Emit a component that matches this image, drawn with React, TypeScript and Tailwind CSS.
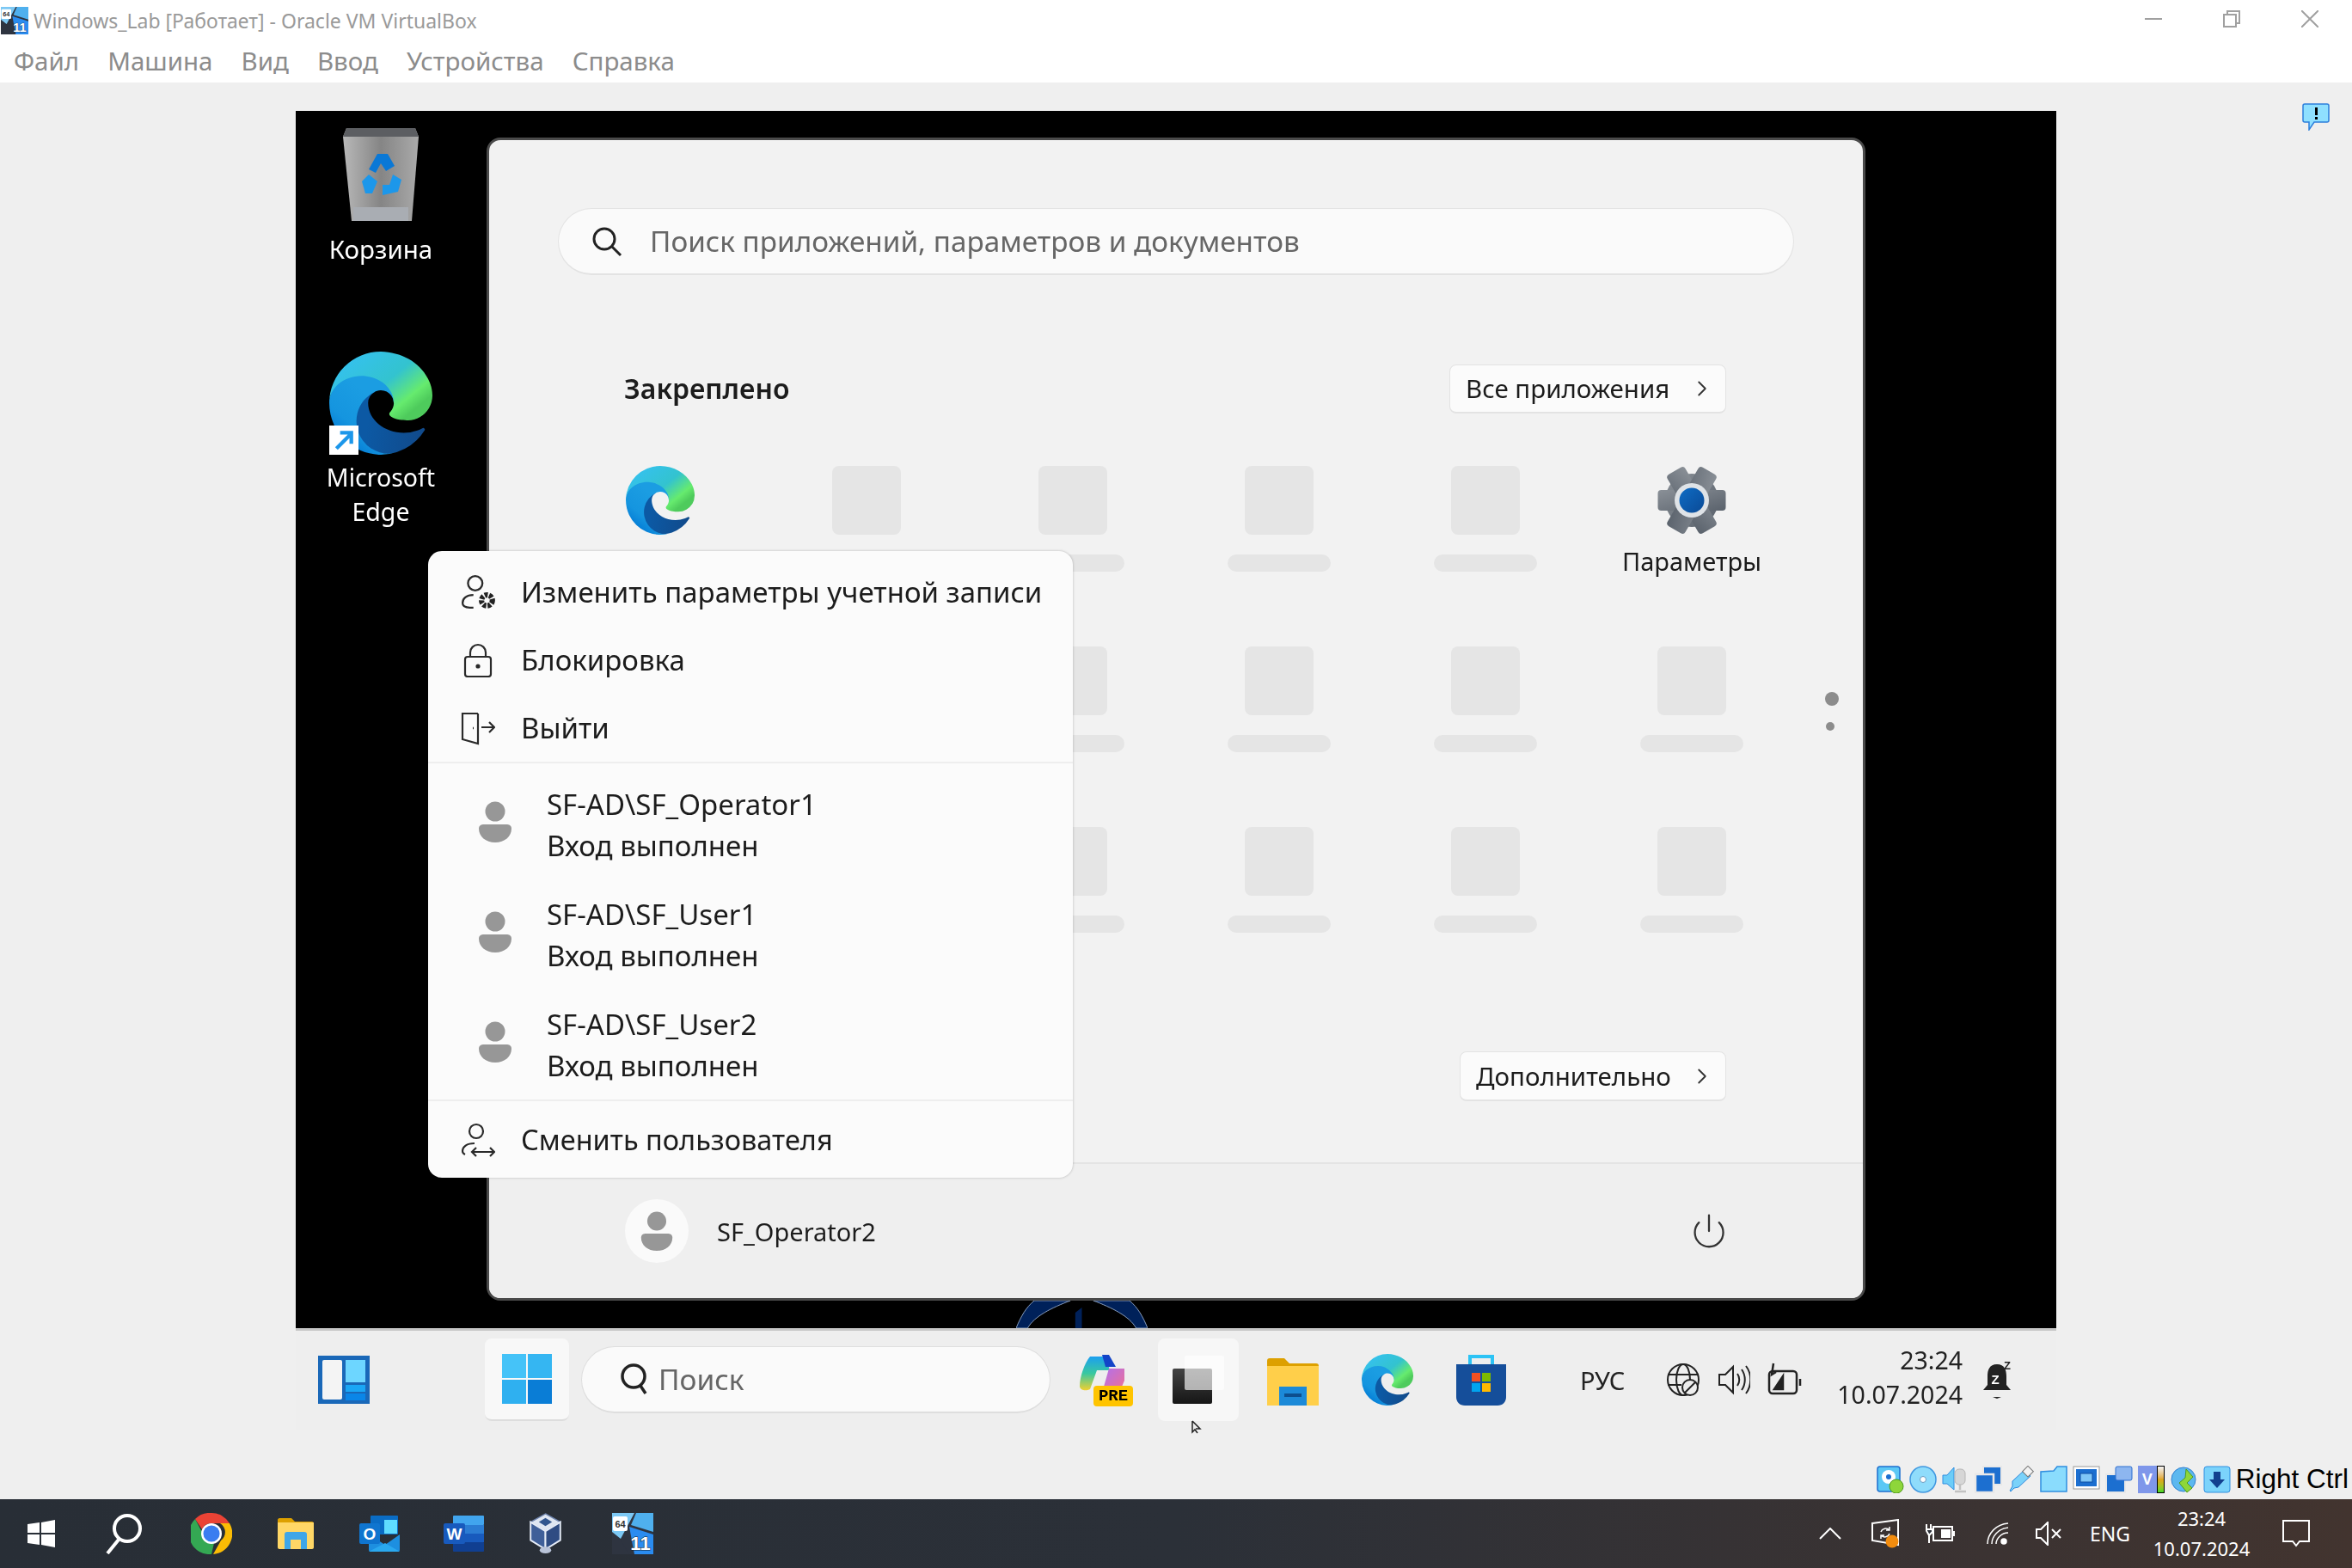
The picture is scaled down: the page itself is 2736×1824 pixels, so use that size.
import { useId } from "react";
import { ChevronRight, Power } from "lucide-react";

const pinnedRows = [0, 1, 2];
const pinnedCols = [0, 1, 2, 3, 4, 5];
const signedIn = ["SF-AD\\SF_Operator1", "SF-AD\\SF_User1", "SF-AD\\SF_User2"];

function EdgeIcon({ className }: { className: string }) {
  const id = useId();
  return (
    <svg viewBox="0 0 256 256" className={className}>
      <defs>
        <linearGradient id={id + "a"} x1="0.2" y1="0.5" x2="1" y2="0.6">
          <stop offset="0" stopColor="#0c59a4" />
          <stop offset="1" stopColor="#114a8b" />
        </linearGradient>
        <linearGradient id={id + "b"} x1="0.6" y1="0.3" x2="0.2" y2="0.9">
          <stop offset="0" stopColor="#1b9de2" />
          <stop offset="0.6" stopColor="#1595df" />
          <stop offset="1" stopColor="#0178d4" />
        </linearGradient>
        <linearGradient id={id + "c"} x1="0.1" y1="0.1" x2="0.9" y2="0.75">
          <stop offset="0" stopColor="#35c1f1" />
          <stop offset="0.55" stopColor="#33c3cf" />
          <stop offset="0.85" stopColor="#66eb6e" />
          <stop offset="1" stopColor="#4ecb5c" />
        </linearGradient>
      </defs>
      <path fill={`url(#${id}a)`} d="M231 190.5c-3.4 1.8-6.900 3.400-10.500 4.700a101.500 101.500 0 0 1-35.800 6.400c-47.200 0-88.300-32.400-88.300-74.100a31.500 31.500 0 0 1 16.400-27.300c-42.700 1.800-53.700 46.300-53.700 72.300 0 73.700 67.900 81.100 82.500 81.100 7.900 0 19.800-2.300 27-4.600l1.300-.4a128.100 128.100 0 0 0 66.500-52.700 4 4 0 0 0-5.400-5.700z" />
      <path fill={`url(#${id}b)`} d="M105.700 241.400A79.200 79.200 0 0 1 83 220a80.700 80.700 0 0 1 29.500-120c3.200-1.500 8.500-4.100 15.600-4a32.400 32.400 0 0 1 25.700 13 31.900 31.900 0 0 1 6.300 18.700c0-.2 24.500-79.600-80-79.600-43.900 0-80 41.600-80 78.200a130.200 130.200 0 0 0 12.100 56 128 128 0 0 0 156.400 67 75.500 75.500 0 0 1-62.800-8z" />
      <path fill={`url(#${id}c)`} d="M152.300 148.900c-.8 1-3.300 2.500-3.300 5.700 0 2.600 1.700 5.100 4.700 7.200 14.400 10 41.500 8.700 41.600 8.700a59.600 59.600 0 0 0 30.300-8.400A61.400 61.400 0 0 0 256 110.500c.3-22.400-8-37.300-11.300-43.900C223.500 25.100 177.700 1.200 128 0A128 128 0 0 0 0 126.200c.5-36.500 36.800-66 80-66 3.500 0 23.500.3 42 10a72.600 72.600 0 0 1 31 29.300c6.100 10.600 7.200 24.100 7.200 29.500s-2.700 13.300-7.900 20z" />
    </svg>
  );
}

function LabIcon({ className }: { className: string }) {
  return (
    <svg viewBox="0 0 48 48" className={className}>
      <rect width="48" height="48" rx="1" fill="#2e3440" />
      <path d="M0 0h26L10 30 0 22z" fill="#7cc8f4" />
      <path d="M28 0h20v22L22 14z" fill="#4fb0ee" />
      <path d="M0 24l10 8 10 16H0z" fill="#2e3440" />
      <path d="M20 16l28 9v23H26z" fill="#2a8cf0" />
      <rect x="1" y="4" width="17" height="17" rx="2" fill="#fff" />
      <text x="9.500" y="17" textAnchor="middle" fontSize="11" fontWeight="700" fill="#333" fontFamily="'Liberation Sans',sans-serif">64</text>
      <text x="33" y="43" textAnchor="middle" fontSize="22" fontWeight="700" fill="#fff" stroke="#123" strokeWidth="1" paintOrder="stroke" fontFamily="'Liberation Sans',sans-serif">11</text>
    </svg>
  );
}

function PersonGlyph({ className }: { className: string }) {
  return (
    <svg viewBox="0 0 38 48" className={className}>
      <circle cx="19" cy="12" r="11.500" fill="#979797" />
      <path d="M0 32c0-4 3-5 6-5h26c3 0 6 1 6 5 0 9-8 16-19 16S0 41 0 32z" fill="#979797" />
    </svg>
  );
}

function VBoxCube({ className }: { className: string }) {
  return (
    <svg viewBox="0 0 40 50" className={className}>
      <path d="M20 1l18 10-18 11L2 11z" fill="#dfe6f2" stroke="#6d83ad" strokeWidth="1.500" />
      <path d="M2 11l18 11v22L2 33z" fill="#3f5f99" stroke="#e6ecf7" strokeWidth="2" />
      <path d="M38 11L20 22v22l18-11z" fill="#2f4c83" stroke="#e6ecf7" strokeWidth="2" />
      <ellipse cx="20" cy="45" rx="7" ry="4" fill="#b9c3d8" />
      <path d="M20 6l8 5-8 5-8-5z" fill="#31558e" />
    </svg>
  );
}

function StatusIcons() {
  return (
    <div className="flex items-center gap-[6px]">
      <svg viewBox="0 0 32 32" className="h-[32px] w-[32px]">
        <rect x="1" y="1" width="26" height="29" rx="3" fill="#5cc8f5" stroke="#1c6fd0" strokeWidth="1.500" />
        <circle cx="14" cy="13" r="8" fill="#fff" />
        <circle cx="14" cy="13" r="3" fill="#1c6fd0" />
        <circle cx="23" cy="24" r="8" fill="#8ed63a" stroke="#4e9a1e" />
      </svg>
      <svg viewBox="0 0 32 32" className="h-[32px] w-[32px]">
        <circle cx="16" cy="16" r="15" fill="#8fdcfb" stroke="#3f97e0" strokeWidth="1.500" />
        <circle cx="16" cy="16" r="3.500" fill="#fff" stroke="#6a9cc0" />
      </svg>
      <svg viewBox="0 0 32 32" className="h-[32px] w-[32px]">
        <path d="M1 11h5l8-9v26l-8-7H1z" fill="#6ccdf8" stroke="#2f8ee0" />
        <rect x="15" y="4" width="12" height="18" rx="5" fill="#d6d6d6" stroke="#b5b5b5" />
        <path d="M21 22v6M15 30h13" stroke="#c2c2c2" strokeWidth="2.500" />
      </svg>
      <svg viewBox="0 0 32 32" className="h-[32px] w-[32px]">
        <rect x="10" y="1" width="21" height="21" fill="#1c6fd0" stroke="#e8e8e8" strokeWidth="2" />
        <rect x="1" y="10" width="21" height="21" fill="#1c6fd0" stroke="#e8e8e8" strokeWidth="2.500" />
      </svg>
      <svg viewBox="0 0 32 32" className="h-[32px] w-[32px]">
        <path d="M6 18L20 5l7 7-14 13-5 1-4 4-1-1 3-5z" fill="#7ad2fa" stroke="#2d88dc" />
        <rect x="20" y="2" width="9" height="9" transform="rotate(45 24 6)" fill="#f2f2f2" stroke="#777" />
      </svg>
      <svg viewBox="0 0 32 32" className="h-[32px] w-[32px]">
        <path d="M1 30V7l15-1 4-5h11v29z" fill="#8adcfd" stroke="#2f8ee0" strokeWidth="1.500" />
      </svg>
      <svg viewBox="0 0 32 32" className="h-[32px] w-[32px]">
        <rect x="1" y="1" width="30" height="26" fill="#fff" stroke="#9a9a9a" />
        <rect x="4" y="4" width="24" height="20" fill="#1c6fd0" />
        <rect x="9" y="9" width="14" height="10" fill="#7fc6f7" stroke="#0e4fa3" />
      </svg>
      <svg viewBox="0 0 32 32" className="h-[32px] w-[32px]">
        <rect x="1" y="10" width="22" height="21" fill="#1c6fd0" stroke="#e8e8e8" strokeWidth="2" />
        <rect x="12" y="1" width="19" height="16" rx="2" fill="#8db6f0" stroke="#2d6fd0" />
      </svg>
      <div className="flex h-[32px] w-[32px]">
        <div className="flex h-[32px] w-[22px] items-center justify-center bg-[#7f97ea] font-['Liberation_Sans',sans-serif] text-[18px] font-bold leading-none text-white">V</div>
        <div className="h-[32px] w-[9px] border border-black bg-gradient-to-b from-[#f4f4f4] via-[#e0a51a] to-[#38d92c]" />
      </div>
      <svg viewBox="0 0 32 32" className="h-[32px] w-[32px]">
        <circle cx="15" cy="16" r="14" fill="#5cb8ef" stroke="#2f7fd0" />
        <path d="M18 4l8 9-7 7 6 6-6 5-9-11 7-6z" fill="#8ed63a" stroke="#4e9a1e" />
      </svg>
      <svg viewBox="0 0 32 32" className="h-[32px] w-[32px]">
        <rect x="1" y="1" width="30" height="30" rx="3" fill="#7bd3fb" stroke="#2f8ee0" />
        <path d="M12 7h8v9h5L16 26 7 16h5z" fill="#123f8f" />
      </svg>
    </div>
  );
}

function DesktopTaskbar() {
  return (
    <div className="flex h-[119px] shrink-0 items-center border-t-[3px] border-[#c6c6c6] bg-[#eeeeee] pb-[2px]">
      <svg viewBox="0 0 60 56" className="ml-[26px] h-[56px] w-[60px]">
        <rect width="60" height="56" fill="#1a68b8" />
        <rect x="5" y="5" width="23" height="46" rx="2" fill="#f4f4f4" />
        <rect x="32" y="5" width="23" height="26" fill="#6dd6ff" />
        <rect x="32" y="34" width="23" height="8" fill="#1aa6f5" />
        <rect x="32" y="44" width="23" height="8" fill="#0a86e8" />
      </svg>
      <div className="ml-[134px] flex h-[96px] w-[98px] items-center justify-center rounded-lg border-b-2 border-[#dddddd] bg-[#f8f8f8]">
        <svg viewBox="0 0 58 58" className="h-[58px] w-[58px]">
          <rect width="28" height="28" fill="#45c3f8" />
          <rect x="30" width="28" height="28" fill="#35b6f2" />
          <rect y="30" width="28" height="28" fill="#2fb0f0" />
          <rect x="30" y="30" width="28" height="28" fill="#0a7dd6" />
        </svg>
      </div>
      <div className="ml-[14px] flex h-[78px] w-[546px] items-center rounded-full border border-b-2 border-[#dedede] bg-[#fafafa] pl-[44px]">
        <svg viewBox="0 0 34 38" fill="none" stroke="#222" strokeWidth="3.500" className="h-[38px] w-[34px]">
          <circle cx="16" cy="15" r="13" />
          <path d="M24 26l6 9" />
        </svg>
        <span className="ml-[11px] text-[33.500px] leading-none text-[#666666]">Поиск</span>
      </div>
      <div className="relative ml-[34px] h-[58px] w-[56px]">
        <svg viewBox="0 0 56 58" className="h-[58px] w-[56px]">
          <defs>
            <linearGradient id="copilotA" x1="0" y1="0" x2="0" y2="1">
              <stop offset="0" stopColor="#1c9ff0" />
              <stop offset="0.5" stopColor="#38c8a0" />
              <stop offset="1" stopColor="#f0d030" />
            </linearGradient>
            <linearGradient id="copilotB" x1="0" y1="0" x2="1" y2="1">
              <stop offset="0" stopColor="#b070f0" />
              <stop offset="1" stopColor="#f07090" />
            </linearGradient>
          </defs>
          <path d="M12 2h18l5 16H20L12 40c-4 2-11 2-12-3 0-12 6-28 12-35z" fill="url(#copilotA)" />
          <path d="M26 0h8l8 14H30z" fill="#1244c8" />
          <path d="M34 16h18v14l-6 14H26z" fill="url(#copilotB)" />
        </svg>
        <span className="absolute bottom-[-2px] right-[-6px] flex h-[24px] w-[46px] items-center justify-center rounded-sm bg-[#ffc400] font-['Liberation_Mono',monospace] text-[19px] font-bold leading-none text-black">PRE</span>
      </div>
      <div className="relative ml-[35px] flex h-[96px] w-[94px] items-center justify-center rounded-lg bg-[#f7f7f7]">
        <div className="relative h-[56px] w-[60px]">
          <div className="absolute bottom-0 left-0 h-[41px] w-[46px] rounded-[2px] bg-gradient-to-b from-[#444444] to-[#161616]" />
          <div className="absolute right-0 top-0 h-[40px] w-[46px] rounded-[2px] bg-white/65" />
        </div>
      </div>
      <svg viewBox="0 0 60 60" className="ml-[33px] h-[60px] w-[60px]">
        <path d="M0 8c0-2 1-3 3-3h17l6 6h31c2 0 3 1 3 3v12H0z" fill="#dda000" />
        <path d="M0 14h60v46H0z" fill="#ffcf4a" />
        <path d="M14 38h32v22H14z" fill="#1c8ad8" />
        <rect x="20" y="46" width="20" height="4" fill="#0d4f8e" />
      </svg>
      <EdgeIcon className="ml-[50px] h-[60px] w-[60px]" />
      <svg viewBox="0 0 58 60" className="ml-[50px] h-[60px] w-[58px]">
        <path d="M16 14V3h26v11" fill="none" stroke="#2cc3f5" strokeWidth="4" />
        <path d="M0 12h58v38c0 6-4 10-10 10H10C4 60 0 56 0 50z" fill="#154e9a" />
        <rect x="18" y="22" width="10" height="10" fill="#f25022" />
        <rect x="30" y="22" width="10" height="10" fill="#7fba00" />
        <rect x="18" y="34" width="10" height="10" fill="#00a4ef" />
        <rect x="30" y="34" width="10" height="10" fill="#ffb900" />
      </svg>
      <span className="ml-[86px] text-[29px] leading-none text-[#222222]">РУС</span>
      <svg viewBox="0 0 40 40" fill="none" stroke="#222" strokeWidth="2" className="ml-[48px] h-[40px] w-[40px]">
        <circle cx="20" cy="20" r="18" />
        <ellipse cx="20" cy="20" rx="8" ry="18" />
        <path d="M2 14h36M2 26h16" />
        <circle cx="28" cy="29" r="9" fill="#eeeeee" />
        <path d="M22 35l12-12" />
      </svg>
      <svg viewBox="0 0 38 40" fill="none" stroke="#222" strokeWidth="2" className="ml-[20px] h-[40px] w-[38px]">
        <path d="M2 14h7l9-9v30l-9-9H2z" />
        <path d="M23 13c3 4 3 10 0 14M28 8c5 7 5 17 0 24M33 4c7 9 7 23 0 32" />
      </svg>
      <svg viewBox="0 0 40 40" fill="none" stroke="#222" strokeWidth="2.500" className="ml-[20px] h-[40px] w-[40px]">
        <rect x="2" y="10" width="32" height="26" rx="4" />
        <path d="M38 19v8" />
        <path d="M8 31l10-15v15z" fill="#222" />
        <path d="M7 1L5 14l5-3" />
      </svg>
      <div className="ml-auto mb-[6px] flex w-[180px] flex-col items-end gap-[3px] text-[28.500px] leading-[37px] text-[#222222]">
        <span>23:24</span>
        <span>10.07.2024</span>
      </div>
      <svg viewBox="0 0 34 44" className="ml-[23px] mr-[52px] h-[44px] w-[34px]">
        <path d="M17 4C8 4 6 11 6 18v10l-5 6h32l-5-6V18c0-7-2-14-11-14z" fill="#222" />
        <path d="M12 42h10l-5 2z" fill="#222" />
        <text x="15" y="27" textAnchor="middle" fontSize="15" fontWeight="700" fill="#fff" fontFamily="'Liberation Sans',sans-serif">Z</text>
        <text x="29" y="10" textAnchor="middle" fontSize="13" fontWeight="700" fill="#222" fontFamily="'Liberation Sans',sans-serif">Z</text>
      </svg>
    </div>
  );
}

function AccountMenu() {
  return (
    <div className="absolute left-[154px] top-[512px] w-[750px] overflow-hidden rounded-[16px] bg-[#fbfbfb] text-[33px] text-[#1c1c1c] shadow-[0_0_3px_rgba(0,0,0,0.25)]">
      <div className="flex h-[247px] flex-col border-b-2 border-[#eeeeee] pt-[8px]">
        <div className="flex h-[80px] items-center pl-[38px]">
          <svg viewBox="0 0 40 40" fill="none" stroke="#2a2a2a" strokeWidth="2.200" className="h-[42px] w-[42px]">
            <circle cx="16" cy="10" r="8" />
            <path d="M14 23C6 23 2 27 2 32c0 3 3 5 8 5h4" />
            <circle cx="29" cy="29" r="6" stroke="#222" strokeWidth="6" strokeDasharray="3.500 1.500" />
          </svg>
          <span className="ml-[28px] whitespace-nowrap leading-none">Изменить параметры учетной записи</span>
        </div>
        <div className="flex h-[80px] items-center pl-[38px]">
          <svg viewBox="0 0 40 40" fill="none" stroke="#2a2a2a" strokeWidth="2.200" className="h-[40px] w-[40px]">
            <rect x="5" y="16" width="30" height="23" rx="3" />
            <path d="M11 16V11a9 9 0 0 1 18 0v5" />
            <circle cx="20" cy="27" r="1.500" fill="#2a2a2a" />
          </svg>
          <span className="ml-[30px] leading-none">Блокировка</span>
        </div>
        <div className="flex h-[80px] items-center pl-[38px]">
          <svg viewBox="0 0 40 40" fill="none" stroke="#2a2a2a" strokeWidth="2.200" className="h-[40px] w-[40px]">
            <path d="M20 3H2v30l18 5V3" />
            <path d="M14 20h1" strokeWidth="2.500" />
            <path d="M24 19h15M33 13l6 6-6 6" />
          </svg>
          <span className="ml-[30px] leading-none">Выйти</span>
        </div>
      </div>
      <div className="flex h-[393px] flex-col border-b-2 border-[#eeeeee] pt-[8px]">
        {signedIn.map((name) => (
          <div key={name} className="flex h-[128px] shrink-0 items-center pl-[59px]">
            <PersonGlyph className="mb-[9px] h-[48px] w-[38px]" />
            <div className="ml-[41px] flex flex-col">
              <span className="leading-[44px]">{name}</span>
              <span className="mt-[4px] leading-[44px]">Вход выполнен</span>
            </div>
          </div>
        ))}
      </div>
      <div className="flex h-[89px] items-center pl-[38px] pt-[2px]">
        <svg viewBox="0 0 40 40" fill="none" stroke="#2a2a2a" strokeWidth="2.200" className="mb-[2px] h-[40px] w-[40px]">
          <circle cx="18" cy="10" r="8" />
          <path d="M16 24C7 24 2 28 2 33c0 2 1 3 3 4" />
          <path d="M13 34h26M18 29l-5 5 5 5M34 29l5 5-5 5" />
        </svg>
        <span className="ml-[30px] text-[32.500px] leading-none">Сменить пользователя</span>
      </div>
    </div>
  );
}

function StartMenu() {
  return (
    <div className="absolute left-[222px] top-[31px] flex h-[1353px] w-[1604px] flex-col overflow-hidden rounded-[16px] border-[3px] border-[#4a4a4a] bg-[#f2f2f2] text-[#1c1c1c]">
      <div className="mx-[80px] mt-[79px] flex h-[78px] shrink-0 items-center rounded-full border border-b-2 border-[#e3e3e3] bg-[#fafafa] pl-[38px]">
        <svg viewBox="0 0 36 36" fill="none" stroke="#222" strokeWidth="3" className="h-[36px] w-[36px]">
          <circle cx="15" cy="15" r="12" />
          <path d="M24 24l10 10" />
        </svg>
        <span className="ml-[32px] text-[33.300px] leading-none text-[#666666]">Поиск приложений, параметров и документов</span>
      </div>
      <div className="mt-[103px] flex h-[58px] shrink-0 items-center justify-between pl-[157px] pr-[159px]">
        <span className="text-[32px] font-semibold leading-none">Закреплено</span>
        <div className="flex h-[57px] w-[322px] items-center justify-between rounded-lg border border-b-2 border-[#e3e3e3] bg-[#fbfbfb] pl-[18px] pr-[12px]">
          <span className="text-[29.500px] leading-none">Все приложения</span>
          <ChevronRight className="h-[30px] w-[30px] text-[#333333]" strokeWidth={1.500} />
        </div>
      </div>
      <div className="relative mt-[61px] grid grid-cols-[repeat(6,240px)] grid-rows-[repeat(3,210px)] pl-[79px]">
        {pinnedRows.map((row) =>
          pinnedCols.map((col) => {
            if (row === 0 && col === 0) {
              return (
                <div key="edge" className="flex justify-center">
                  <EdgeIcon className="h-[80px] w-[80px]" />
                </div>
              );
            }
            if (row === 0 && col === 5) {
              return (
                <div key="settings" className="flex flex-col items-center">
                  <svg viewBox="0 0 80 80" className="h-[80px] w-[80px]">
                    <defs>
                      <linearGradient id="gearFill" x1="0" y1="0" x2="1" y2="1">
                        <stop offset="0" stopColor="#8a9097" />
                        <stop offset="1" stopColor="#5a626c" />
                      </linearGradient>
                      <linearGradient id="gearCore" x1="0" y1="0" x2="1" y2="1">
                        <stop offset="0" stopColor="#0f6cc4" />
                        <stop offset="1" stopColor="#0a4a96" />
                      </linearGradient>
                    </defs>
                    <circle cx="40" cy="40" r="31" fill="url(#gearFill)" />
                    {[0, 60, 120].map((a) => (
                      <rect key={a} x="0.500" y="28" width="79" height="24" rx="4" fill="url(#gearFill)" transform={`rotate(${a} 40 40)`} />
                    ))}
                    <circle cx="40" cy="40" r="20" fill="#dfe3e7" />
                    <circle cx="40" cy="40" r="14.500" fill="url(#gearCore)" />
                  </svg>
                  <span className="mt-[11px] text-[29px] leading-[40px]">Параметры</span>
                </div>
              );
            }
            return (
              <div key={`${row}-${col}`} className="flex flex-col items-center">
                <div className="h-[80px] w-[80px] rounded-lg bg-[#e5e5e5]" />
                <div className="mt-[23px] h-[20px] w-[120px] rounded-full bg-[#e5e5e5]" />
              </div>
            );
          }),
        )}
        <div className="absolute left-[1554px] top-[263px] h-[16px] w-[16px] rounded-full bg-[#8c8c8c]" />
        <div className="absolute left-[1555px] top-[298px] h-[10px] w-[10px] rounded-full bg-[#8c8c8c]" />
      </div>
      <div className="mt-[51px] flex h-[58px] shrink-0 justify-end pr-[159px]">
        <div className="flex w-[310px] items-center justify-between rounded-lg border border-b-2 border-[#e3e3e3] bg-[#fbfbfb] pl-[18px] pr-[12px]">
          <span className="text-[29.500px] leading-none">Дополнительно</span>
          <ChevronRight className="h-[30px] w-[30px] text-[#333333]" strokeWidth={1.500} />
        </div>
      </div>
      <div className="mt-auto flex h-[158px] shrink-0 items-center border-t-2 border-[#e4e4e4] bg-[#efefef] pl-[158px] pr-[157px]">
        <div className="flex h-[74px] w-[74px] items-center justify-center rounded-full bg-[#fafafa]">
          <PersonGlyph className="h-[46px] w-[38px]" />
        </div>
        <span className="ml-[33px] text-[29px] leading-none">SF_Operator2</span>
        <Power className="ml-auto h-[44px] w-[44px] text-[#333333]" strokeWidth={1.250} />
      </div>
    </div>
  );
}

export default function App() {
  return (
    <div className="flex h-[1824px] w-[2736px] flex-col overflow-hidden bg-[#efefef] font-['Noto_Sans',sans-serif]">
      <div className="flex h-[96px] shrink-0 flex-col bg-white">
        <div className="flex h-[48px] items-center pl-[1px] pr-[39px]">
          <LabIcon className="h-[32px] w-[32px]" />
          <span className="ml-[6px] text-[23px] leading-none text-[#9a9a9a]">Windows_Lab [Работает] - Oracle VM VirtualBox</span>
          <div className="ml-auto flex gap-[71px] pb-[4px]">
            <svg viewBox="0 0 20 20" stroke="#a0a0a0" strokeWidth="2" fill="none" className="h-[20px] w-[20px]">
              <path d="M0 10h20" />
            </svg>
            <svg viewBox="0 0 20 20" stroke="#a0a0a0" strokeWidth="2" fill="none" className="h-[20px] w-[20px]">
              <rect x="1" y="5" width="14" height="14" />
              <path d="M5 5V1h14v14h-4" />
            </svg>
            <svg viewBox="0 0 20 20" stroke="#a0a0a0" strokeWidth="2" fill="none" className="h-[20px] w-[20px]">
              <path d="M0 0l20 20M20 0L0 20" />
            </svg>
          </div>
        </div>
        <div className="flex gap-[33px] pl-[16px] text-[29.500px] leading-[46px] text-[#8c8c8c]">
          <span>Файл</span>
          <span>Машина</span>
          <span>Вид</span>
          <span>Ввод</span>
          <span>Устройства</span>
          <span>Справка</span>
        </div>
      </div>

      <div className="relative flex flex-1 flex-col items-center pt-[33px]">
        <svg viewBox="0 0 32 32" className="absolute left-[2678px] top-[24px] h-[32px] w-[32px]">
          <path d="M3 1h26c1 0 2 1 2 2v17c0 1-1 2-2 2H14l-6 9v-9H3c-1 0-2-1-2-2V3c0-1 1-2 2-2z" fill="#8fe0ff" stroke="#2d7fdc" strokeWidth="1.500" />
          <path d="M15 5h3v9h-3zM15 16h3v3h-3z" fill="#000" />
        </svg>
        <div className="flex h-[1535px] w-[2048px] shrink-0 flex-col bg-black blur-[0.5px]">
          <div className="relative flex-1">
            <div className="absolute left-[0px] top-[20px] flex w-[198px] flex-col items-center text-[29.500px] leading-[40px] text-white">
              <svg viewBox="0 0 88 108" className="h-[108px] w-[88px]">
                <defs>
                  <linearGradient id="binFill" x1="0" y1="0" x2="1" y2="0">
                    <stop offset="0" stopColor="#b8b8b8" />
                    <stop offset="0.5" stopColor="#858585" />
                    <stop offset="1" stopColor="#aaaaaa" />
                  </linearGradient>
                </defs>
                <path d="M4 0h80l4 10-8 98H10L0 10z" fill="url(#binFill)" />
                <path d="M4 0h80l4 10H0z" fill="#5c5e62" />
                <path d="M12 92h64v16H12z" fill="#a9adb3" />
                <path d="M30 48l10-18h12l8 14-10 6-6-9-6 11z" fill="#0a78d6" />
                <path d="M22 62l8-8 10 8-6 14H26z" fill="#1c97ea" />
                <path d="M46 78l18-4 4-14-10-6-4 12h-8z" fill="#1c97ea" />
              </svg>
              <span className="mt-[13px]">Корзина</span>
              <div className="relative mt-[99px] h-[120px] w-[120px]">
                <EdgeIcon className="h-[120px] w-[120px]" />
                <div className="absolute bottom-0 left-0 flex h-[34px] w-[34px] items-center justify-center bg-white">
                  <svg viewBox="0 0 24 24" fill="none" stroke="#1c97ea" strokeWidth="4" className="h-[26px] w-[26px]">
                    <path d="M4 21L19 6M8 4h12v12" />
                  </svg>
                </div>
              </div>
              <span className="mt-[6px] text-center text-[28.500px]">Microsoft Edge</span>
            </div>
            <svg viewBox="0 0 160 32" preserveAspectRatio="none" className="absolute bottom-0 left-[838px] h-[32px] w-[153px]">
              <path d="M0 32C6 18 12 8 22 0h44C44 8 22 18 14 32z" fill="#00215a" stroke="#8aa0c0" strokeWidth="1" />
              <path d="M160 32C154 18 148 8 138 0H94c22 8 44 18 52 32z" fill="#00215a" stroke="#8aa0c0" strokeWidth="1" />
              <path d="M72 32V14l8-6v24z" fill="#00215a" />
            </svg>
            <StartMenu />
            <AccountMenu />
          </div>
          <DesktopTaskbar />
        </div>
        <svg viewBox="0 0 12 16" fill="none" stroke="#222" strokeWidth="1.500" className="absolute left-[1386px] top-[1556px] h-[16px] w-[12px]">
          <path d="M1 1v13l3-3 3 4M1 1l9 9H5" />
        </svg>
        <div className="flex w-full flex-1 items-center justify-end gap-[6px] pr-[4px] pt-[34px]">
          <StatusIcons />
          <span className="font-['Liberation_Sans',sans-serif] text-[31.500px] leading-none text-black">Right Ctrl</span>
        </div>
      </div>

      <div className="flex h-[80px] shrink-0 items-center bg-gradient-to-r from-[#282e36] via-[#2b3038] to-[#42342f] text-white">
        <svg viewBox="0 0 32 32" fill="#fff" className="ml-[32px] h-[32px] w-[32px]">
          <path d="M0 5l14-2v12H0zM16 3l16-3v15H16zM0 17h14v12L0 27zM16 17h16v15l-16-3z" />
        </svg>
        <svg viewBox="0 0 44 48" fill="none" stroke="#fff" strokeWidth="4" className="ml-[58px] h-[48px] w-[44px]">
          <circle cx="26" cy="18" r="15" />
          <path d="M16 31L3 47" />
        </svg>
        <svg viewBox="0 0 48 48" className="ml-[56px] h-[48px] w-[48px]">
          <path d="M24 0a24 24 0 0 1 21 12H24a12 12 0 0 0-11 7L5 7a24 24 0 0 1 19-7z" fill="#ea4335" />
          <path d="M45 12a24 24 0 0 1-19 36l9-16a12 12 0 0 0-1-20z" fill="#fbbc05" />
          <path d="M5 7l9 17a12 12 0 0 0 13 11l-3 13A24 24 0 0 1 5 7z" fill="#34a853" />
          <circle cx="24" cy="24" r="12" fill="#fff" />
          <circle cx="24" cy="24" r="9.500" fill="#3a7df0" />
        </svg>
        <svg viewBox="0 0 42 36" className="ml-[53px] h-[36px] w-[42px]">
          <path d="M0 2c0-1 1-2 2-2h14l4 4h20c1 0 2 1 2 2v6H0z" fill="#dda000" />
          <path d="M0 5h42v29c0 1-1 2-2 2H2c-1 0-2-1-2-2z" fill="#ffd766" />
          <path d="M8 36V19c0-2 1-3 3-3h20c2 0 3 1 3 3v17h-7V25H15v11z" fill="#3fa6e8" />
        </svg>
        <svg viewBox="0 0 47 42" className="ml-[53px] h-[42px] w-[47px]">
          <rect x="13" width="32" height="22" rx="1" fill="#0a6cc4" />
          <rect x="29" y="5" width="15" height="16" fill="#5fdcff" />
          <path d="M11 22l19 12 17-12v18c0 1-1 2-2 2H13c-1 0-2-1-2-2z" fill="#1d8fe0" />
          <path d="M11 42l19-10 17 10z" fill="#2aa8ee" />
          <rect y="9" width="24" height="24" rx="2" fill="#0f75cf" />
          <text x="12" y="28" textAnchor="middle" fontSize="19" fontWeight="700" fill="#fff" fontFamily="'Liberation Sans',sans-serif">O</text>
        </svg>
        <svg viewBox="0 0 47 42" className="ml-[51px] h-[42px] w-[47px]">
          <rect x="11" width="36" height="11" rx="1" fill="#41a5ee" />
          <rect x="11" y="11" width="36" height="10" fill="#2b7cd3" />
          <rect x="11" y="21" width="36" height="10" fill="#185abd" />
          <rect x="11" y="31" width="36" height="11" rx="1" fill="#103f91" />
          <rect y="9" width="25" height="24" rx="2" fill="#185abd" />
          <text x="12.500" y="28" textAnchor="middle" fontSize="19" fontWeight="700" fill="#fff" fontFamily="'Liberation Sans',sans-serif">W</text>
        </svg>
        <VBoxCube className="ml-[52px] h-[48px] w-[39px]" />
        <LabIcon className="ml-[58px] h-[48px] w-[48px]" />
        <div className="ml-auto flex items-center">
          <svg viewBox="0 0 26 14" fill="none" stroke="#fff" strokeWidth="2" className="h-[14px] w-[26px]">
            <path d="M1 13L13 1l12 12" />
          </svg>
          <svg viewBox="0 0 34 34" className="ml-[34px] h-[34px] w-[34px]">
            <path d="M2 5l30-4v29L2 25z" fill="none" stroke="#fff" strokeWidth="2" />
            <path d="M12 15a6 6 0 0 1 10-2M22 17a6 6 0 0 1-10 2M22 9v4h-4M12 23v-4h4" fill="none" stroke="#fff" strokeWidth="1.500" />
            <circle cx="25" cy="26" r="7.500" fill="#f28c0f" />
          </svg>
          <svg viewBox="0 0 34 24" fill="none" stroke="#fff" strokeWidth="2" className="ml-[30px] h-[24px] w-[34px]">
            <rect x="9" y="4" width="22" height="16" />
            <path d="M33 9v6" />
            <rect x="18" y="7" width="11" height="10" fill="#fff" stroke="none" />
            <path d="M1 1v6M6 1v6M0 7h8v3l-4 4zM4 14v9" fill="#2b3038" />
          </svg>
          <svg viewBox="0 0 26 26" fill="none" stroke="#fff" strokeWidth="1.500" className="ml-[37px] h-[26px] w-[26px]">
            <path d="M1 25C1 13 11 2 25 1M6 25c0-9 8-18 19-19M11 25c0-6 6-13 14-13" />
            <circle cx="20" cy="22" r="3" fill="#fff" />
          </svg>
          <svg viewBox="0 0 30 28" fill="none" stroke="#fff" strokeWidth="2" className="ml-[31px] h-[28px] w-[30px]">
            <path d="M1 9h5l8-8v26l-8-8H1z" />
            <path d="M19 9l10 10M29 9L19 19" />
          </svg>
          <span className="ml-[33px] text-[23px] leading-none">ENG</span>
          <div className="ml-[23px] flex w-[120px] flex-col items-center text-[22px] leading-[35px]">
            <span>23:24</span>
            <span>10.07.2024</span>
          </div>
          <svg viewBox="0 0 32 32" fill="none" stroke="#fff" strokeWidth="2" className="ml-[34px] mr-[49px] h-[32px] w-[32px]">
            <path d="M1 1h30v24H20l-4 5-4-5H1z" />
          </svg>
        </div>
      </div>
    </div>
  );
}
